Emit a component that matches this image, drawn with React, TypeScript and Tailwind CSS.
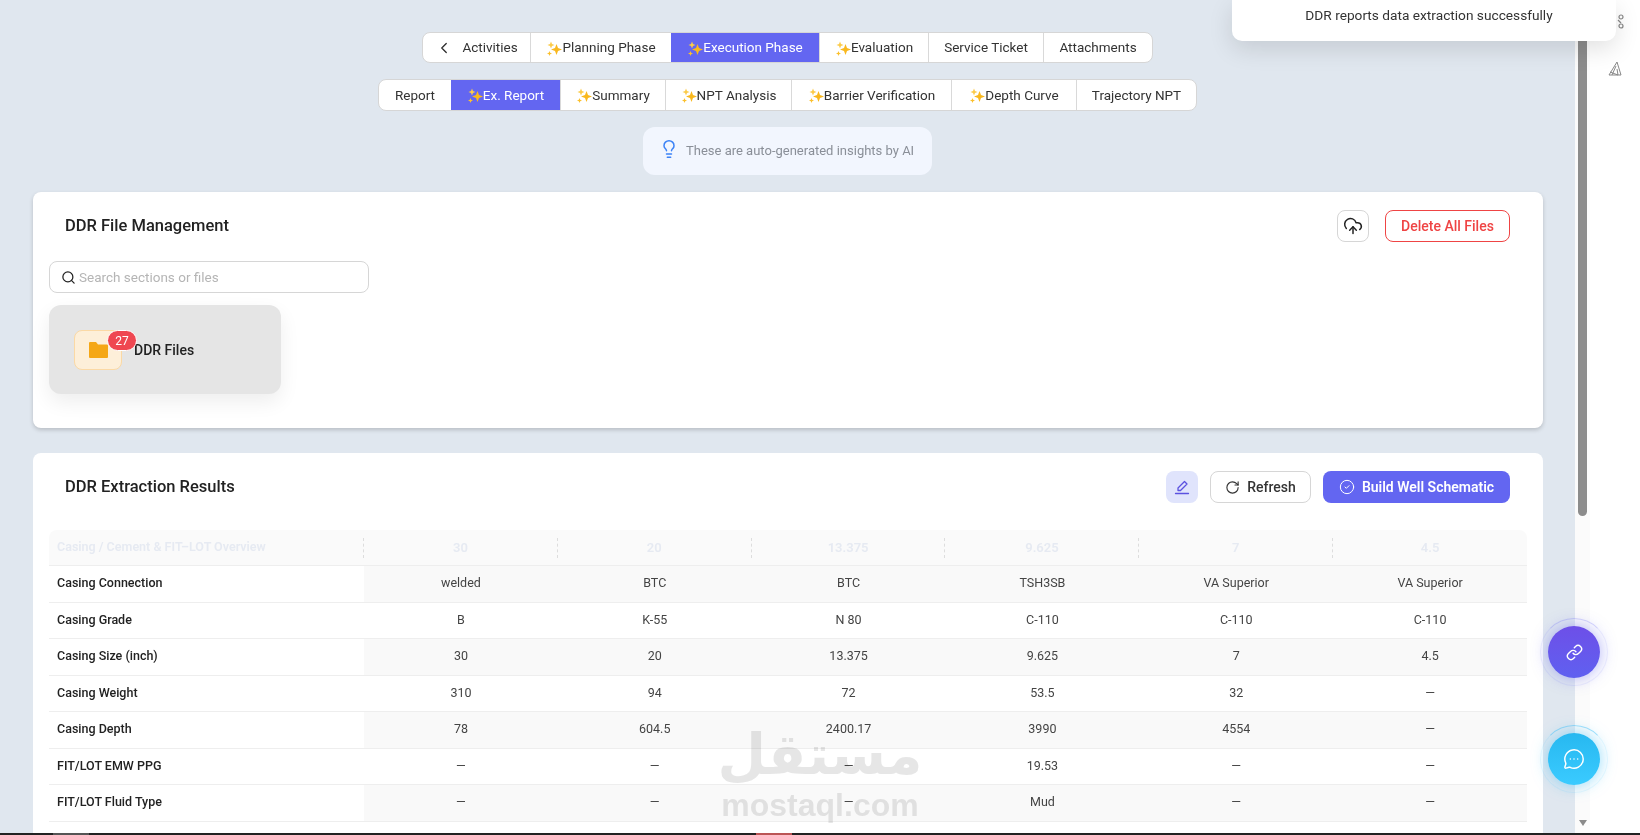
import React from 'react'
import { ChevronLeft, CircleCheck, CloudUpload, Lightbulb, Link, MessageCircleMore, RotateCw, Search } from 'lucide-react'

const Sparkle = () => (
  <svg width="16" height="16" viewBox="0 0 16 16" className="shrink-0 mt-[2px]">
    <path fill="#f9b81e" d="M10.5 3 12 7 16 8.5 12 10 10.5 14 9 10 5 8.5 9 7Z" />
    <path fill="#fbcb4a" d="M5 .5 6 3 8.5 4 6 5 5 7.5 4 5 1.5 4 4 3Z" />
    <path fill="#fbc02d" d="M3.5 10 4.2 11.8 6 12.5 4.2 13.2 3.5 15 2.8 13.2 1 12.5 2.8 11.8Z" />
  </svg>
)

interface TabItem {
  label: string
  width: string
  ai?: boolean
  active?: boolean
  back?: boolean
}

const phaseTabs: TabItem[] = [
  { label: 'Activities', width: 'w-[107px]', back: true },
  { label: 'Planning Phase', width: 'w-[141px]', ai: true },
  { label: 'Execution Phase', width: 'w-[148px]', ai: true, active: true },
  { label: 'Evaluation', width: 'w-[109px]', ai: true },
  { label: 'Service Ticket', width: 'w-[115px]' },
  { label: 'Attachments', width: 'w-[109px]' },
]

const reportTabs: TabItem[] = [
  { label: 'Report', width: 'w-[72px]' },
  { label: 'Ex. Report', width: 'w-[109px]', ai: true, active: true },
  { label: 'Summary', width: 'w-[105px]', ai: true },
  { label: 'NPT Analysis', width: 'w-[126px]', ai: true },
  { label: 'Barrier Verification', width: 'w-[160px]', ai: true },
  { label: 'Depth Curve', width: 'w-[125px]', ai: true },
  { label: 'Trajectory NPT', width: 'w-[120px]' },
]

const TabBar = ({ tabs, height }: { tabs: TabItem[]; height: string }) => (
  <div className={`flex ${height} bg-white border border-[#d6d6d6] rounded-lg overflow-hidden`}>
    {tabs.map((tab, i) => (
      <div
        key={tab.label}
        className={`${tab.width} flex items-center justify-center text-[13.5px] ${i > 0 ? 'border-l border-[#d9d9d9]' : ''} ${tab.active ? 'bg-[#6366f1] text-white border-l-0' : 'text-[#333]'}`}
      >
        {tab.back && <ChevronLeft size={18} strokeWidth={1.8} className="mr-[9px]" />}
        {tab.ai && <Sparkle />}
        <span>{tab.label}</span>
      </div>
    ))}
  </div>
)

const columns = ['30', '20', '13.375', '9.625', '7', '4.5']

const rows = [
  { label: 'Casing Connection', values: ['welded', 'BTC', 'BTC', 'TSH3SB', 'VA Superior', 'VA Superior'] },
  { label: 'Casing Grade', values: ['B', 'K-55', 'N 80', 'C-110', 'C-110', 'C-110'] },
  { label: 'Casing Size (inch)', values: ['30', '20', '13.375', '9.625', '7', '4.5'] },
  { label: 'Casing Weight', values: ['310', '94', '72', '53.5', '32', '—'] },
  { label: 'Casing Depth', values: ['78', '604.5', '2400.17', '3990', '4554', '—'] },
  { label: 'FIT/LOT EMW PPG', values: ['—', '—', '—', '19.53', '—', '—'] },
  { label: 'FIT/LOT Fluid Type', values: ['—', '—', '—', 'Mud', '—', '—'] },
]

const ResultsTable = () => (
  <div className="mx-4 mt-[27px] grid grid-cols-[315px_repeat(6,1fr)]">
    <div className="h-[36px] bg-[#fafafa] rounded-tl-lg border-b border-[#eee] flex items-center pl-2 text-[12.5px] font-semibold text-[#e6eaf2]">
      <span className="flex-1">Casing / Cement &amp; FIT–LOT Overview</span>
      <span className="h-5 border-r border-dashed border-[#ddd]" />
    </div>
    {columns.map((col, i) => (
      <div key={col} className={`h-[36px] bg-[#fafafa] border-b border-[#eee] flex items-center text-[13px] font-semibold text-[#e6eaf2] ${i === 5 ? 'rounded-tr-lg' : ''}`}>
        <span className="flex-1 text-center">{col}</span>
        {i < 5 && <span className="h-5 border-r border-dashed border-[#ddd]" />}
      </div>
    ))}
    {rows.map((row, r) => (
      <React.Fragment key={row.label}>
        <div className="h-[36.5px] border-b border-[#eee] flex items-center pl-2 text-[12.5px] font-medium text-[#222]">
          {row.label}
        </div>
        {row.values.map((v, i) => (
          <div
            key={i}
            className={`h-[36.5px] border-b border-[#eee] flex items-center justify-center text-[12.5px] text-[#444] ${r % 2 === 0 ? 'bg-[#f9f9f9]' : 'bg-white'}`}
          >
            {v}
          </div>
        ))}
      </React.Fragment>
    ))}
  </div>
)

export default function App() {
  return (
    <div className="relative w-[1640px] h-[835px] overflow-hidden bg-white font-['Roboto',sans-serif]">
      <div className="flex h-[833px]">
        {/* main column */}
        <main className="w-[1575px] shrink-0 bg-[#e0e7ef] flex flex-col pt-8 overflow-hidden">
          <div className="flex flex-col items-center">
            <TabBar tabs={phaseTabs} height="h-[31px]" />
            <div className="mt-[16px]">
              <TabBar tabs={reportTabs} height="h-[32px]" />
            </div>
            <div className="mt-4 w-[289px] h-12 bg-[#f2f6fe] rounded-xl flex items-center pl-[16px] gap-[7px]">
              <Lightbulb size={20} strokeWidth={1.8} className="text-[#3b82f6] -mt-1" />
              <span className="text-[13px] text-[#8a8f98]">These are auto-generated insights by AI</span>
            </div>
          </div>

          <section className="mt-[17px] ml-[33px] mr-8 h-[236px] shrink-0 bg-white rounded-lg shadow-[0_2px_4px_rgba(0,0,0,0.18)]">
            <div className="flex items-center justify-between pt-[18px] pl-8 pr-[33px]">
              <h2 className="mt-[1px] text-[16.5px] font-medium text-[#222]">DDR File Management</h2>
              <div className="flex items-center gap-4">
                <button className="w-8 h-8 flex items-center justify-center border border-[#d6d6d6] rounded-lg text-[#222]">
                  <CloudUpload size={20} strokeWidth={1.8} />
                </button>
                <button className="w-[125px] h-8 border border-[#ef4444] rounded-lg text-sm font-medium text-[#ef4444]">
                  Delete All Files
                </button>
              </div>
            </div>
            <div className="ml-4 mt-[19px] w-[320px] h-[32px] border border-[#d6d6d6] rounded-lg flex items-center pl-[11px] gap-[3px] text-[#222]">
              <Search size={15} strokeWidth={2} />
              <span className="text-[13.5px] text-[#b5b5b5]">Search sections or files</span>
            </div>
            <div className="ml-4 mt-[12px] w-[232px] h-[89px] bg-[#e5e5e5] rounded-xl shadow-[0_8px_20px_rgba(0,0,0,0.07)] flex items-center pl-[25px]">
              <div className="relative w-12 h-10 mt-[1px] bg-[#fdefd9] border border-[#fbd9a5] rounded-lg flex items-center justify-center">
                <svg width="19" height="16" viewBox="0 0 19 16">
                  <path fill="#f5a716" d="M0 1a1 1 0 0 1 1-1h6l2 2.5h9a1 1 0 0 1 1 1V15a1 1 0 0 1-1 1H1a1 1 0 0 1-1-1Z" />
                </svg>
                <span className="absolute -top-[1px] -right-[16px] w-[30px] h-[21px] rounded-full bg-[#ef4751] border border-white flex items-center justify-center text-xs text-white">
                  27
                </span>
              </div>
              <span className="ml-3 text-sm font-medium text-[#222]">DDR Files</span>
            </div>
          </section>

          <section className="mt-[25px] ml-[33px] mr-8 flex-1 bg-white rounded-t-lg">
            <div className="flex items-center justify-between pt-[18px] pl-8 pr-[33px]">
              <h2 className="text-[16.5px] font-medium text-[#222]">DDR Extraction Results</h2>
              <div className="flex items-center gap-3">
                <button className="w-8 h-8 flex items-center justify-center bg-[#e0e4fc] rounded-lg">
                  <svg width="16" height="16" viewBox="0 0 16 16" fill="none" stroke="#5b52e0" strokeWidth="1.3" strokeLinejoin="round">
                    <path d="M4 11.5V9l6.5-6.5 2.5 2.5L6.5 11.5Z" />
                    <path d="M1.5 14.5h13" strokeLinecap="round" />
                  </svg>
                </button>
                <button className="w-[101px] h-8 flex items-center justify-center gap-[7px] border border-[#d6d6d6] rounded-lg text-sm font-medium text-[#333]">
                  <RotateCw size={15} strokeWidth={1.8} />
                  Refresh
                </button>
                <button className="w-[187px] h-8 flex items-center justify-center gap-[7px] bg-[#6366f1] rounded-lg text-sm font-semibold text-white">
                  <CircleCheck size={16} strokeWidth={1.5} />
                  Build Well Schematic
                </button>
              </div>
            </div>
            <ResultsTable />
          </section>
        </main>

        {/* page scrollbar */}
        <div className="w-[15px] shrink-0 bg-[#fbfbfb] flex flex-col items-center justify-between pb-[7px]">
          <div className="mt-[16px] w-[9px] h-[500px] bg-[#8c8c8c] rounded-b-md" />
          <div className="w-0 h-0 border-x-[4px] border-x-transparent border-t-[6px] border-t-[#8a8a8a]" />
        </div>

        {/* right rail */}
        <aside className="flex-1 bg-white flex flex-col items-center pt-[14px] gap-[31px] text-[#888]">
          <svg width="10" height="16" viewBox="0 0 10 16" fill="none" stroke="currentColor" strokeWidth="1.2" className="ml-[10px]">
            <circle cx="6" cy="3" r="2" />
            <circle cx="6" cy="12" r="2" />
            <path d="M3 6l3 3" />
          </svg>
          <svg width="16" height="16" viewBox="0 0 16 16" fill="none" stroke="currentColor" strokeWidth="1">
            <path d="M10 1 2 14h12Z" />
            <path d="M9 5 5 14M10 8l1 6M3 11l8 3" />
          </svg>
        </aside>
      </div>

      {/* window strip */}
      <div className="h-[2px] bg-[#222] flex">
        <span className="ml-[53px] w-9 bg-[#555]" />
        <span className="ml-[667px] w-9 bg-[#b55]" />
      </div>

      {/* toast */}
      <div className="absolute top-0 right-6 w-[384px] h-[41px] bg-white rounded-b-[10px] shadow-[0_8px_24px_rgba(0,0,0,0.12)] flex items-center justify-center pb-[11px] pl-[10px] text-[13.7px] text-[#333]">
        DDR reports data extraction successfully
      </div>

      {/* floating buttons */}
      <div className="absolute left-[1548px] top-[626px] w-[52px] h-[52px] rounded-full bg-gradient-to-b from-[#6d4fe8] to-[#5f60f0] shadow-[0_0_16px_rgba(99,102,241,0.5)] flex items-center justify-center text-white">
        <span className="absolute -inset-2 rounded-full border border-[#6366f1]/10 border-t-[#6366f1]/25" />
        <Link size={17} strokeWidth={2} />
      </div>
      <div className="absolute left-[1548px] top-[733px] w-[52px] h-[52px] rounded-full bg-gradient-to-b from-[#27b8f0] to-[#3acbff] shadow-[0_0_16px_rgba(56,189,248,0.55)] flex items-center justify-center text-white">
        <span className="absolute -inset-2 rounded-full border border-[#38bdf8]/10 border-t-[#38bdf8]/45" />
        <MessageCircleMore size={22} strokeWidth={1.6} />
      </div>

      {/* watermark */}
      <div className="absolute left-[721px] top-[722px] w-[198px] pointer-events-none flex flex-col items-center text-[#dcdcdc] opacity-70 mix-blend-multiply">
        <span dir="rtl" lang="ar" className="text-[56px] leading-[66px] font-bold font-['DejaVu_Sans',sans-serif]">مستقل</span>
        <span className="text-[32px] leading-[34px] font-bold font-['Liberation_Sans',sans-serif]">mostaql.com</span>
      </div>
    </div>
  )
}
